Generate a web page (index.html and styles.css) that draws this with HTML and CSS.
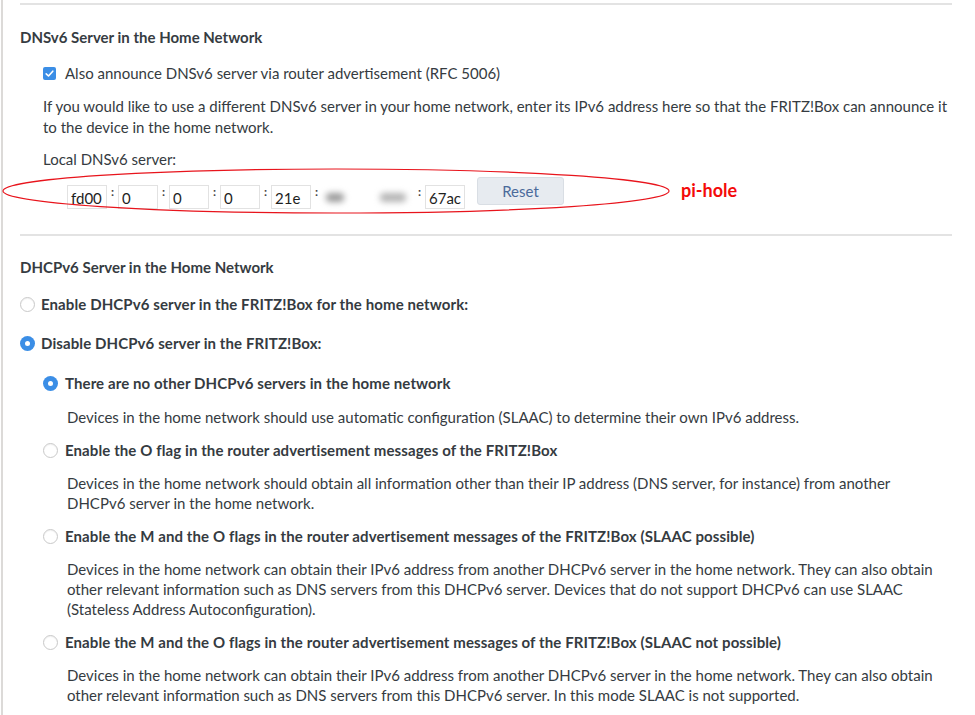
FILE: index.html
```html
<!DOCTYPE html>
<html lang="en">
<head>
    <meta charset="UTF-8">
    <title>IPv6 Home Network</title>
    <link rel="stylesheet" href="styles.css">
</head>
<body>
<div class="page">

    <hr class="sep sep-top">

    <h3 class="section-title">DNSv6 Server in the Home Network</h3>

    <label class="check-row">
        <span class="checkbox">
            <svg width="13" height="13" viewBox="0 0 13 13"><path d="M3.2 6.8 L5.5 9 L9.8 4.2" fill="none" stroke="#fff" stroke-width="1.6" stroke-linecap="round" stroke-linejoin="round"/></svg>
        </span>
        Also announce DNSv6 server via router advertisement (RFC 5006)
    </label>

    <p class="dns-text">If you would like to use a different DNSv6 server in your home network, enter its IPv6 address here so that the FRITZ!Box can announce it to the device in the home network.</p>

    <div class="dns-label">Local DNSv6 server:</div>

    <div class="addr-row">
        <svg class="ring" width="672" height="50" viewBox="0 0 672 50">
            <ellipse cx="335" cy="24" rx="333" ry="22" fill="none" stroke="#e8141c" stroke-width="1.2"/>
        </svg>
        <div class="addr">
            <input class="seg" type="text" value="fd00">
            <span class="colon">:</span>
            <input class="seg" type="text" value="0">
            <span class="colon">:</span>
            <input class="seg" type="text" value="0">
            <span class="colon">:</span>
            <input class="seg" type="text" value="0">
            <span class="colon">:</span>
            <input class="seg" type="text" value="21e">
            <span class="colon">:</span>
            <span class="blurred">
                <span class="blob blob-a"></span>
                <span class="blob blob-b"></span>
            </span>
            <span class="colon">:</span>
            <input class="seg" type="text" value="67ac">
        </div>
        <button class="btn-reset" type="button">Reset</button>
        <span class="note">pi-hole</span>
    </div>

    <hr class="sep sep-mid">

    <h3 class="section-title">DHCPv6 Server in the Home Network</h3>

    <div class="radio-row level-1 first">
        <span class="radio"></span>
        <span class="radio-label">Enable DHCPv6 server in the FRITZ!Box for the home network:</span>
    </div>

    <div class="radio-row level-1">
        <span class="radio on"></span>
        <span class="radio-label">Disable DHCPv6 server in the FRITZ!Box:</span>
    </div>

    <div class="radio-row level-2 opt-1">
        <span class="radio on"></span>
        <span class="radio-label">There are no other DHCPv6 servers in the home network</span>
    </div>
    <p class="desc">Devices in the home network should use automatic configuration (SLAAC) to determine their own IPv6 address.</p>

    <div class="radio-row level-2">
        <span class="radio"></span>
        <span class="radio-label">Enable the O flag in the router advertisement messages of the FRITZ!Box</span>
    </div>
    <p class="desc">Devices in the home network should obtain all information other than their IP address (DNS server, for instance) from another DHCPv6 server in the home network.</p>

    <div class="radio-row level-2">
        <span class="radio"></span>
        <span class="radio-label">Enable the M and the O flags in the router advertisement messages of the FRITZ!Box (SLAAC possible)</span>
    </div>
    <p class="desc">Devices in the home network can obtain their IPv6 address from another DHCPv6 server in the home network. They can also obtain other relevant information such as DNS servers from this DHCPv6 server. Devices that do not support DHCPv6 can use SLAAC (Stateless Address Autoconfiguration).</p>

    <div class="radio-row level-2">
        <span class="radio"></span>
        <span class="radio-label">Enable the M and the O flags in the router advertisement messages of the FRITZ!Box (SLAAC not possible)</span>
    </div>
    <p class="desc">Devices in the home network can obtain their IPv6 address from another DHCPv6 server in the home network. They can also obtain other relevant information such as DNS servers from this DHCPv6 server. In this mode SLAAC is not supported.</p>

</div>
</body>
</html>
```

FILE: styles.css
```css
body {
    margin: 0;
    padding: 0;
    background: #ffffff;
    font-family: Lato, "Open Sans", sans-serif;
    font-size: 15px;
    line-height: 20px;
    color: #353b41;
    overflow: hidden;
}

.page {
    margin-left: 1px;
    border-left: 2px solid #dcdad8;
    padding: 0 23px 0 17px;
    min-height: 715px;
    box-sizing: border-box;
}

.sep {
    border: none;
    border-top: 2px solid #e3e3e3;
    margin: 0;
}

.sep-top {
    padding-top: 3px;
    border-top: none;
    border-bottom: 2px solid #e3e3e3;
}

.sep-mid {
    margin-top: 25px;
}

.section-title {
    margin: 0;
    font-size: 15px;
    font-weight: 700;
    color: #363c42;
}

.sep-top + .section-title {
    margin-top: 22px;
}

.sep-mid + .section-title {
    margin-top: 21px;
}

/* checkbox row */
.check-row {
    display: flex;
    align-items: center;
    margin: 16px 0 0 23px;
}

.checkbox {
    width: 13px;
    height: 13px;
    border-radius: 2px;
    background: #3b8ee6;
    margin-right: 9px;
    display: flex;
}

.dns-text {
    margin: 13px 0 0 23px;
    line-height: 21px;
}

.dns-label {
    margin: 11px 0 0 23px;
}

/* address inputs */
.addr-row {
    position: relative;
    display: flex;
    align-items: flex-start;
    margin-top: 8px;
    height: 32px;
}

.ring {
    position: absolute;
    left: -19px;
    top: -10px;
    pointer-events: none;
}

.addr {
    display: flex;
    align-items: flex-start;
    margin: 8px 0 0 47px;
}

.seg {
    width: 40px;
    height: 24px;
    box-sizing: border-box;
    border: 1px solid #e2e2e2;
    padding: 2px 3px 0;
    font-family: Lato, "Open Sans", sans-serif;
    font-size: 15px;
    color: #1e1e1e;
    outline: none;
}

.colon {
    width: 11px;
    text-align: center;
    font-size: 12px;
    line-height: 14px;
    font-weight: 700;
    color: #444;
}

.blurred {
    width: 92px;
    height: 24px;
    position: relative;
    filter: blur(3px);
}

.blob {
    position: absolute;
    top: 8px;
    height: 9px;
    background: #9a9a9a;
    border-radius: 4px;
}

.blob-a {
    left: 4px;
    width: 18px;
}

.blob-b {
    left: 58px;
    width: 26px;
    background: #b4b4b4;
}

.btn-reset {
    margin-left: 12px;
    width: 87px;
    height: 28px;
    background: #e7ebf0;
    border: 1px solid #d9dee4;
    border-radius: 3px;
    font-family: Lato, "Open Sans", sans-serif;
    font-size: 15px;
    color: #4b6a9b;
}

.note {
    margin: 3px 0 0 117px;
    color: #f40a0a;
    font-weight: 700;
    font-size: 18px;
}

/* radio options */
.radio-row {
    display: flex;
    align-items: center;
}

.radio-label {
    font-weight: 700;
    letter-spacing: 0.1px;
}

.radio {
    width: 15px;
    height: 15px;
    box-sizing: border-box;
    border-radius: 50%;
    border: 1px solid #c9c9c9;
    background: #fff;
    box-shadow: inset 0 1px 1px rgba(0, 0, 0, 0.06);
    margin-right: 6px;
    flex-shrink: 0;
    position: relative;
}

.radio.on {
    border: none;
    box-shadow: none;
    background: #3b8ee6;
}

.radio.on::after {
    content: "";
    position: absolute;
    left: 5px;
    top: 5px;
    width: 5px;
    height: 5px;
    border-radius: 50%;
    background: #fff;
}

.level-1 {
    margin-top: 19px;
}

.level-1.first {
    margin-top: 17px;
}

.level-2 {
    margin-left: 23px;
    margin-top: 13px;
}

.level-2 .radio {
    margin-right: 7px;
}

.level-2.opt-1 {
    margin-top: 20px;
}

.desc {
    margin: 13px 0 0 47px;
}

.opt-1 + .desc {
    margin-top: 14px;
}
```
